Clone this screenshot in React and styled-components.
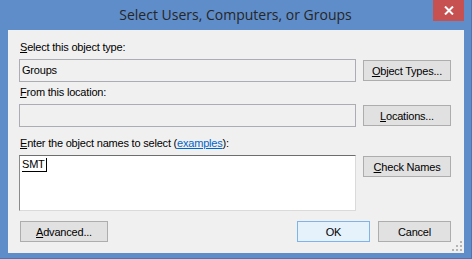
import React from "react";
import styled, {createGlobalStyle} from "styled-components";

const GlobalStyle = createGlobalStyle`
  html, body {
    margin: 0;
    padding: 0;
    background: #ffffff;
  }
`;

const Window = styled.div`
  position: relative;
  width: 472px;
  height: 259px;
  box-sizing: border-box;
  background: #5f8dca;
  border-right: 1px solid #4a76b1;
  border-bottom: 1px solid #4a76b1;
  display: flex;
  flex-direction: column;
  font-family: "Liberation Sans", Arial, sans-serif;
`;

const TitleBar = styled.div`
  position: relative;
  height: 30px;
  display: flex;
  align-items: center;
  justify-content: center;
`;

const Title = styled.span`
  font-family: "Open Sans", "Noto Sans", sans-serif;
  font-size: 14px;
  color: #262626;
  margin-bottom: 1px;
`;

const CloseButton = styled.div`
  position: absolute;
  top: 0;
  right: 7px;
  width: 31px;
  height: 21px;
  background: #c75050;
  display: flex;
  align-items: center;
  justify-content: center;
`;

const Client = styled.div`
  position: relative;
  margin: 0 7px 0 8px;
  height: 223px;
  box-sizing: border-box;
  background: #f0f0f0;
  padding: 11px 12px 0 11px;
  display: grid;
  grid-template-columns: 337px 88px;
  column-gap: 7px;
  align-content: start;
`;

const Label = styled.div`
  grid-column: 1 / span 2;
  font-size: 11px;
  letter-spacing: -0.2px;
  line-height: 13px;
  color: #000;
  padding-left: 1px;
  margin-top: ${(p) => p.$top || 0}px;
  margin-bottom: 5px;
`;

const Link = styled.span`
  color: #0066cc;
  text-decoration: underline;
`;

const Field = styled.div`
  height: 23px;
  box-sizing: border-box;
  border: 1px solid #abadb3;
  background: #f0f0f0;
  font-size: 11px;
  letter-spacing: -0.2px;
  line-height: 21px;
  padding-left: 2px;
  color: #000;
`;

const NameBox = styled.div`
  height: 56px;
  box-sizing: border-box;
  border-top: 1px solid #6d6d6d;
  border-left: 1px solid #8a8a8a;
  border-right: 1px solid #dadada;
  border-bottom: 1px solid #dadada;
  background: #ffffff;
  padding: 2px 0 0 2px;
  font-size: 11px;
  letter-spacing: -0.2px;
  line-height: 13px;
  color: #000;
`;

const Typed = styled.span`
  display: inline-block;
  border-bottom: 1px solid #000;
  border-right: 1px solid #000;
  padding: 0 1px 0 0;
  line-height: 13px;
`;

const Button = styled.div`
  width: ${(p) => p.$width || 88}px;
  height: 21px;
  box-sizing: border-box;
  border: 1px solid ${(p) => (p.$default ? "#7eb4ea" : "#adadad")};
  background: ${(p) => (p.$default ? "#e5f1fb" : "#e1e1e1")};
  font-size: 11px;
  letter-spacing: -0.2px;
  color: #000;
  display: flex;
  align-items: center;
  justify-content: center;
  align-self: ${(p) => p.$align || "center"};
  margin-top: ${(p) => p.$top || 0}px;
`;

const Footer = styled.div`
  grid-column: 1 / span 2;
  margin-top: 10px;
  display: flex;
  gap: 8px;
  padding-left: 1px;
`;

const Spacer = styled.div`
  flex: 1;
`;

const Grip = styled.svg`
  position: absolute;
  right: 2px;
  bottom: 2px;
`;

const Frame = styled.div`
  flex: 1;
`;

export default function App() {
  return (
    <>
      <GlobalStyle />
      <Window>
        <TitleBar>
          <Title>Select Users, Computers, or Groups</Title>
          <CloseButton>
            <svg width="10" height="9" viewBox="0 0 10 9">
              <path d="M1 0.5 L9 8.5 M9 0.5 L1 8.5" stroke="#ffffff" strokeWidth="2" />
            </svg>
          </CloseButton>
        </TitleBar>
        <Client>
          <Label>
            <u>S</u>elect this object type:
          </Label>
          <Field>Groups</Field>
          <Button>
            <u>O</u>bject Types...
          </Button>

          <Label $top={4}>
            <u>F</u>rom this location:
          </Label>
          <Field />
          <Button>
            <u>L</u>ocations...
          </Button>

          <Label $top={10}>
            <u>E</u>nter the object names to select (<Link>examples</Link>):
          </Label>
          <NameBox>
            <Typed>SMT</Typed>
          </NameBox>
          <Button $align="start" $top={1}>
            <u>C</u>heck Names
          </Button>

          <Footer>
            <Button>
              <u>A</u>dvanced...
            </Button>
            <Spacer />
            <Button $width={73} $default>
              OK
            </Button>
            <Button $width={73}>Cancel</Button>
          </Footer>
          <Grip width="10" height="10" viewBox="0 0 10 10">
            <g fill="#b4b4b4">
              <rect x="8" y="0" width="2" height="2" />
              <rect x="4" y="4" width="2" height="2" />
              <rect x="8" y="4" width="2" height="2" />
              <rect x="0" y="8" width="2" height="2" />
              <rect x="4" y="8" width="2" height="2" />
              <rect x="8" y="8" width="2" height="2" />
            </g>
          </Grip>
        </Client>
        <Frame />
      </Window>
    </>
  );
}
